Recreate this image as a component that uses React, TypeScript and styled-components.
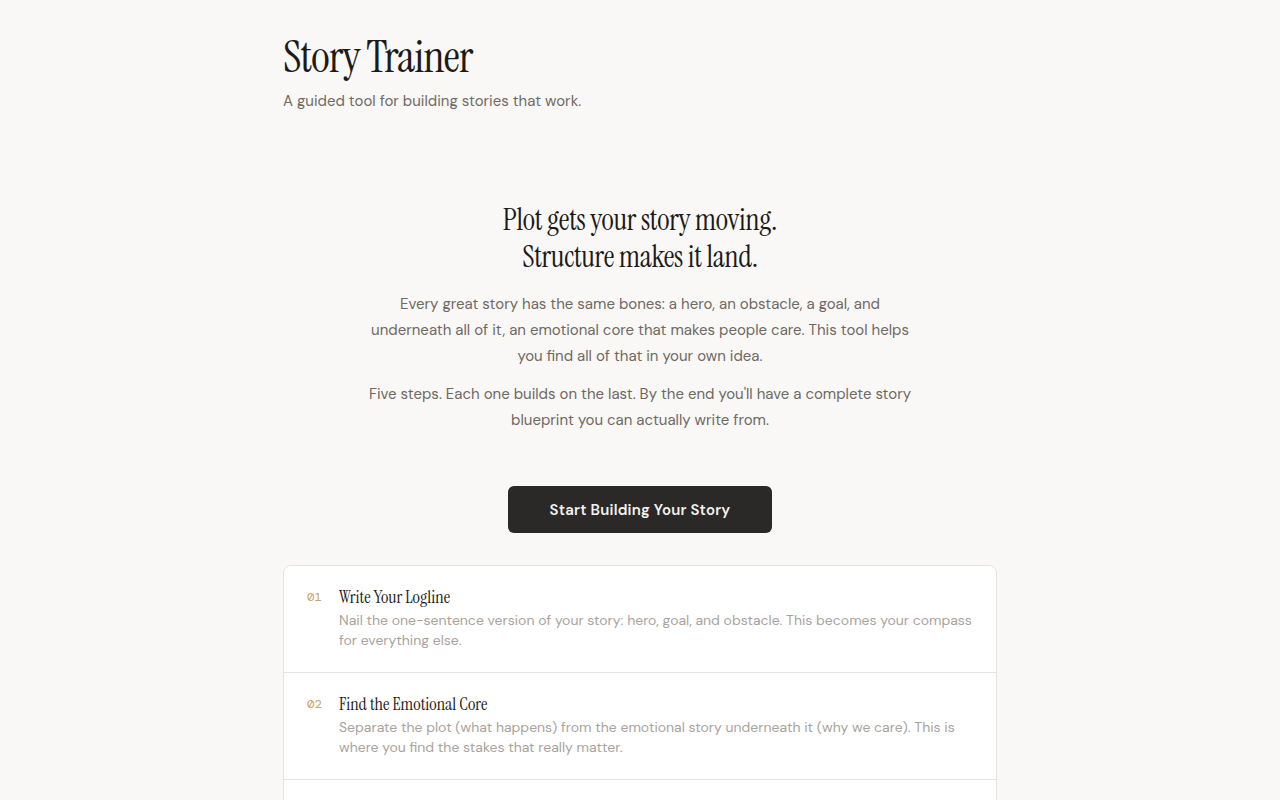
import React from "react";
import styled, { createGlobalStyle } from "styled-components";

const Global = createGlobalStyle`
  html, body { margin: 0; padding: 0; background: #f9f8f6; }
  body { font-family: "DM Sans", Inter, "Liberation Sans", sans-serif; color: #2a2825; }
  * { box-sizing: border-box; }
`;

const serif = `"Instrument Serif", "Liberation Serif", serif`;

const Page = styled.div`
  width: 714px;
  margin: 0 auto;
  padding: 30px 0 40px;
  display: flex;
  flex-direction: column;
`;

const Header = styled.header`
  display: flex;
  flex-direction: column;
  gap: 7px;
`;

const Title = styled.h1`
  margin: 0;
  font-family: ${serif};
  font-weight: 400;
  font-size: 45px;
  line-height: 54px;
  letter-spacing: -0.8px;
  color: #1d1b18;
`;

const Subtitle = styled.p`
  margin: 0;
  font-size: 15px;
  color: #716b64;
`;

const Hero = styled.section`
  margin-top: 90px;
  display: flex;
  flex-direction: column;
  align-items: center;
  text-align: center;
`;

const HeroTitle = styled.h2`
  margin: 0 0 16px;
  font-family: ${serif};
  font-weight: 400;
  font-size: 30px;
  line-height: 37px;
  letter-spacing: -0.3px;
  color: #1d1b18;
`;

const Lead = styled.p`
  margin: 0 0 12px;
  max-width: 560px;
  font-size: 15px;
  line-height: 26px;
  color: #6f6963;
`;

const CTA = styled.button`
  margin-top: 41px;
  width: 264px;
  height: 47px;
  border: none;
  border-radius: 6px;
  background: #2a2927;
  color: #f4f2ee;
  font-family: inherit;
  font-size: 15px;
  font-weight: 600;
  letter-spacing: 0.2px;
  cursor: pointer;
`;

const Steps = styled.ol`
  list-style: none;
  margin: 32px 0 0;
  padding: 0;
  background: #ffffff;
  border: 1px solid #e7e4df;
  border-radius: 8px;
`;

const Step = styled.li`
  display: grid;
  grid-template-columns: 32px 1fr;
  padding: 20px 24px 22px 23px;
  border-bottom: 1px solid #e7e4df;
  min-height: 106px;
`;

const Num = styled.span`
  font-family: "DM Mono", "DejaVu Sans Mono", "Liberation Mono", monospace;
  font-size: 12.5px;
  line-height: 22px;
  color: #c9a467;
`;

const StepBody = styled.div`
  display: flex;
  flex-direction: column;
  gap: 2px;
`;

const StepTitle = styled.h3`
  margin: 0;
  font-family: ${serif};
  font-weight: 400;
  font-size: 18px;
  line-height: 22px;
  color: #1d1b18;
`;

const StepText = styled.p`
  margin: 0;
  font-size: 14px;
  line-height: 20px;
  color: #a9a39c;
`;

const steps = [
  {
    n: "01",
    t: "Write Your Logline",
    d: "Nail the one-sentence version of your story: hero, goal, and obstacle. This becomes your compass for everything else.",
  },
  {
    n: "02",
    t: "Find the Emotional Core",
    d: "Separate the plot (what happens) from the emotional story underneath it (why we care). This is where you find the stakes that really matter.",
  },
  {
    n: "03",
    t: "Build Your Structure",
    d: "Map your story onto a proven shape so every scene pulls its weight and the ending feels earned.",
  },
];

export default function App() {
  return (
    <>
      <Global />
      <Page>
        <Header>
          <Title>Story Trainer</Title>
          <Subtitle>A guided tool for building stories that work.</Subtitle>
        </Header>
        <Hero>
          <HeroTitle>
            Plot gets your story moving.
            <br />
            Structure makes it land.
          </HeroTitle>
          <Lead>
            Every great story has the same bones: a hero, an obstacle, a goal, and underneath all of it, an
            emotional core that makes people care. This tool helps you find all of that in your own idea.
          </Lead>
          <Lead>
            Five steps. Each one builds on the last. By the end you'll have a complete story blueprint you can
            actually write from.
          </Lead>
          <CTA>Start Building Your Story</CTA>
        </Hero>
        <Steps>
          {steps.map((s) => (
            <Step key={s.n}>
              <Num>{s.n}</Num>
              <StepBody>
                <StepTitle>{s.t}</StepTitle>
                <StepText>{s.d}</StepText>
              </StepBody>
            </Step>
          ))}
        </Steps>
      </Page>
    </>
  );
}
